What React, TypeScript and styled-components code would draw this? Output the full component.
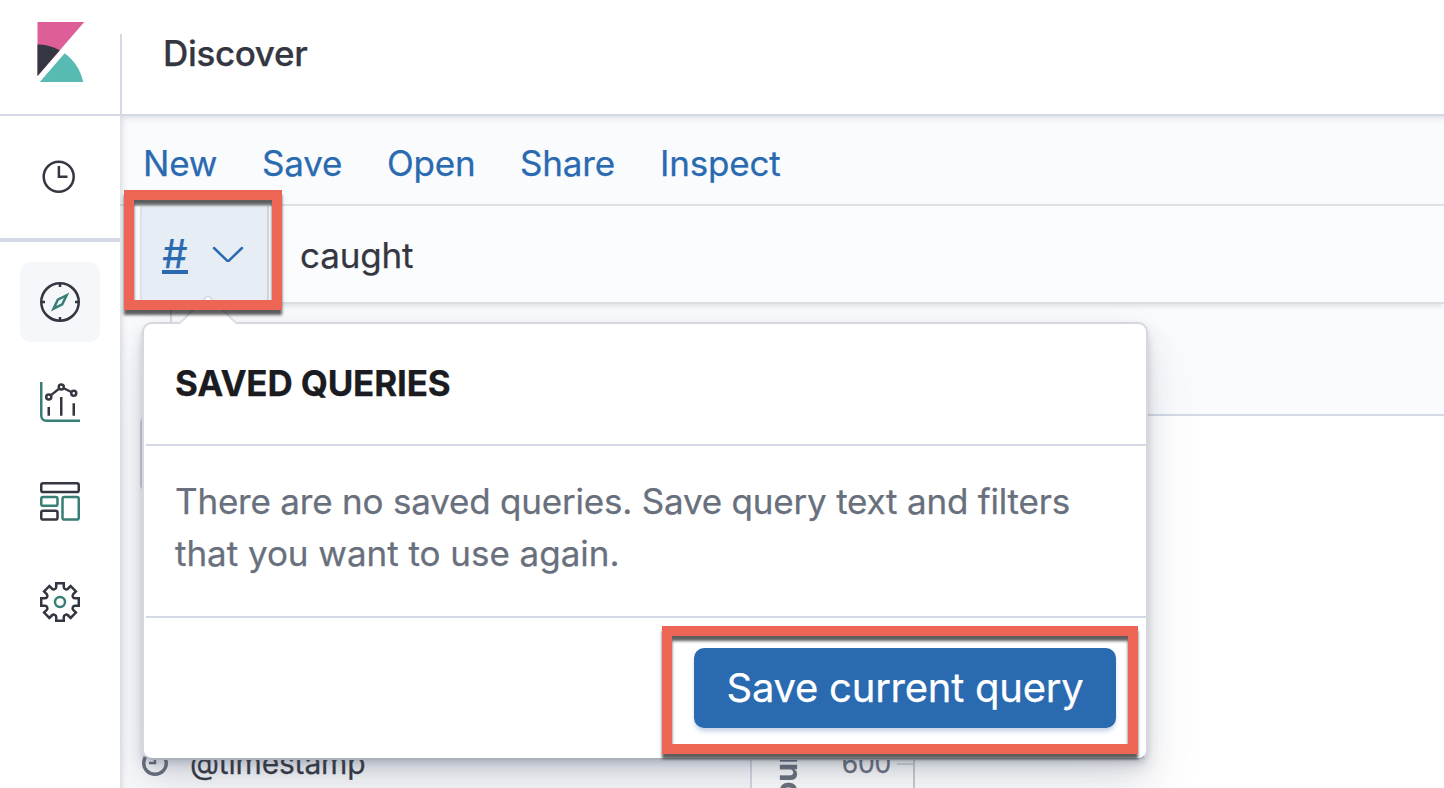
import React from "react";
import styled, { createGlobalStyle } from "styled-components";

const c = {
  text: "#343741",
  title: "#1a1c21",
  subdued: "#69707d",
  primary: "#2a6ab0",
  border: "#d3dae6",
  accent: "#377e75",
  callout: "#ed6554",
};

const GlobalStyle = createGlobalStyle`
  *, *::before, *::after { box-sizing: border-box; }
  body {
    margin: 0;
    background: #fff;
    color: ${c.text};
    font-family: Inter, "Liberation Sans", sans-serif;
    font-size: 35px;
    letter-spacing: -0.005em;
    -webkit-text-stroke: 0.25px currentColor;
    overflow: hidden;
  }
`;

const Page = styled.div`
  width: 1444px;
  height: 788px;
  display: flex;
  flex-direction: column;
  position: relative;
  overflow: hidden;
`;

const Header = styled.header`
  height: 116px;
  flex: none;
  display: flex;
  border-bottom: 2px solid ${c.border};
`;

const LogoCell = styled.div`
  width: 120px;
  padding: 22px 0 0 30px;
  svg { display: block; }
`;

const HeaderTitle = styled.div`
  margin-top: 34px;
  flex: 1;
  border-left: 2px solid ${c.border};
  padding-left: 41px;
  line-height: 38px;
  font-weight: 500;
  letter-spacing: -0.01em;
`;

const Body = styled.div`
  flex: 1;
  min-height: 0;
  display: flex;
`;

const SideNav = styled.nav`
  width: 120px;
  flex: none;
  display: flex;
  flex-direction: column;
  align-items: center;
`;

const Recent = styled.div`
  width: 100%;
  height: 126px;
  flex: none;
  border-bottom: 4px solid ${c.border};
  padding: 44px 0 0 42px;
  svg { display: block; }
`;

const NavList = styled.div`
  display: flex;
  flex-direction: column;
  gap: 20px;
  padding-top: 20px;
`;

const NavItem = styled.a<{ $active?: boolean }>`
  width: 80px;
  height: 80px;
  border-radius: 10px;
  display: flex;
  align-items: center;
  justify-content: center;
  background: ${(p) => (p.$active ? "#f5f7fa" : "transparent")};
`;

const Main = styled.main`
  flex: 1;
  min-width: 0;
  display: flex;
  flex-direction: column;
  background: #fafbfd;
  position: relative;
  overflow: hidden;
  &::before {
    content: "";
    position: absolute;
    inset: 0;
    pointer-events: none;
    box-shadow: inset 6px 5px 6px -4px rgba(65, 78, 101, 0.2);
  }
`;

const Menu = styled.div`
  height: 90px;
  flex: none;
  display: flex;
  gap: 45px;
  padding: 26px 0 0 23px;
  border-bottom: 2px solid #dfe1e6;
  line-height: 42px;
  color: ${c.primary};
`;

const MenuLink = styled.a<{ $w: number }>`
  width: ${(p) => p.$w}px;
  white-space: nowrap;
`;

const QueryBar = styled.div`
  height: 98px;
  flex: none;
  display: flex;
  margin-left: 20px;
  background: #fbfcfd;
  border-left: 2px solid #dfe1e6;
  border-bottom: 2px solid #dcdee3;
  box-shadow: 0 4px 4px -1px rgba(65, 78, 101, 0.12);
`;

const SavedQueryButton = styled.div`
  width: 127px;
  display: flex;
  align-items: center;
  background: #e6edf5;
  border-right: 2px solid #cdd3dc;
  padding-left: 20px;
  gap: 24px;
`;

const Hash = styled.span`
  width: 26px;
  height: 40px;
  display: flex;
  justify-content: center;
  font-size: 40px;
  line-height: 39px;
  letter-spacing: 0;
  color: ${c.primary};
  border-bottom: 4px solid ${c.primary};
`;

const QueryText = styled.div`
  padding: 28px 0 0 31px;
  line-height: 42px;
`;

const FilterBar = styled.div`
  height: 112px;
  flex: none;
  margin-left: 24px;
  border-bottom: 2px solid ${c.border};
  padding-left: 26px;
`;

const FilterDivider = styled.div`
  width: 2px;
  height: 60px;
  background: ${c.border};
`;

const Content = styled.div`
  flex: 1;
  min-height: 0;
  display: flex;
`;

const Fields = styled.aside`
  width: 632px;
  flex: none;
  display: flex;
  flex-direction: column;
  justify-content: space-between;
  background: #fafbfd;
  border-right: 2px solid ${c.border};
  padding-left: 20px;
`;

const IndexPattern = styled.div`
  height: 74px;
  width: 590px;
  margin-top: 1px;
  border: 2px solid #cbd3e1;
  border-radius: 6px;
`;

const FieldRow = styled.div`
  display: flex;
  align-items: center;
  height: 50px;
  gap: 21px;
  padding-left: 1px;
  font-size: 30px;
`;

const Chart = styled.section`
  flex: 1;
  background: #fff;
  display: flex;
  align-items: flex-end;
  padding-left: 19px;
`;

const AxisTitle = styled.div`
  width: 30px;
  height: 100px;
  margin-bottom: -34px;
  writing-mode: vertical-rl;
  transform: rotate(180deg);
  font-size: 30px;
  line-height: 30px;
  font-weight: 700;
  color: ${c.subdued};
`;

const AxisLabels = styled.div`
  width: 90px;
  text-align: right;
  font-size: 26.5px;
  line-height: 40px;
  color: ${c.subdued};
  margin-bottom: 5px;
`;

const AxisTick = styled.div`
  width: 16px;
  height: 25px;
  margin-left: 6px;
  border-top: 2px solid #dcdcde;
`;

const AxisLine = styled.div`
  width: 2px;
  height: 320px;
  background: #cbcdd1;
`;

const Popover = styled.div`
  position: absolute;
  left: 22px;
  top: 206px;
  width: 1006px;
  height: 438px;
  background: #fff;
  border: 2px solid #d6d8de;
  border-bottom-color: #acb1bc;
  border-radius: 10px;
  box-shadow:
    0 30px 60px 0 rgba(65, 78, 101, 0.1),
    0 15px 30px 0 rgba(65, 78, 101, 0.12),
    0 8px 12px 0 rgba(65, 78, 101, 0.12),
    0 3px 5px 0 rgba(65, 78, 101, 0.15);
`;

const Arrow = styled.svg`
  position: absolute;
  left: 34px;
  top: -31px;
  width: 60px;
  height: 32px;
`;

const PopoverTitle = styled.div`
  height: 122px;
  margin-left: 2px;
  padding: 37px 0 0 29px;
  border-bottom: 2px solid ${c.border};
  line-height: 44px;
  font-weight: 700;
  color: ${c.title};
  text-transform: uppercase;
`;

const PopoverText = styled.p`
  margin: 0 0 0 2px;
  height: 172px;
  padding: 29px 0 0 29px;
  border-bottom: 2px solid ${c.border};
  line-height: 52px;
  color: ${c.subdued};
  white-space: nowrap;
`;

const TextLine = styled.span<{ $tracking: number }>`
  display: block;
  letter-spacing: ${(p) => p.$tracking}px;
`;

const PopoverFooter = styled.div`
  display: flex;
  justify-content: flex-end;
  padding: 30px 30px 0 0;
`;

const SaveButton = styled.button`
  width: 422px;
  height: 80px;
  padding: 0;
  border: 0;
  border-radius: 10px;
  background: ${c.primary};
  color: #fff;
  font: 400 40px/80px Inter, "Liberation Sans", sans-serif;
  letter-spacing: -0.006em;
  white-space: nowrap;
  box-shadow: 0 4px 5px -1px rgba(54, 97, 166, 0.3);
`;

const Highlight = styled.div<{ $x: number; $y: number; $w: number; $h: number }>`
  position: absolute;
  left: ${(p) => p.$x}px;
  top: ${(p) => p.$y}px;
  width: ${(p) => p.$w}px;
  height: ${(p) => p.$h}px;
  border: 10px solid ${c.callout};
  filter: drop-shadow(0 5px 1.7px rgba(0, 0, 0, 0.63));
  pointer-events: none;
`;

const KibanaLogo = () => (
  <svg width="60" height="60" viewBox="0 0 32 32">
    <path fill="#de5e98" d="M4 0v28.789L28.935.017z" />
    <path fill="#343741" d="M4 12v16.789l11.906-13.738A24.721 24.721 0 004 12z" />
    <path fill="#57bbb3" d="M18.479 16.664L6.268 30.754l-1.073 1.237h23.191c-1.252-6.292-4.883-11.719-9.908-15.327z" />
  </svg>
);

const ClockIcon = () => (
  <svg width="34" height="34" viewBox="0 0 34 34" fill="none" stroke={c.text} strokeWidth="2.5">
    <circle cx="16.7" cy="16.7" r="15" />
    <path d="M16.9 6v10.8h8.6" />
  </svg>
);

const AppIcon = ({ children }: { children: React.ReactNode }) => (
  <svg width="40" height="40" viewBox="0 0 32 32" fill="none" stroke={c.text} strokeWidth="2">
    {children}
  </svg>
);

const CompassIcon = () => (
  <AppIcon>
    <circle cx="16" cy="16" r="15" />
    <path d="M16 1v3M16 28v3M1 16h3M28 16h3" />
    <path stroke={c.accent} d="M21.3 10.6l-7 3.5-3.5 7.2 7-3.5z" />
  </AppIcon>
);

const VisualizeIcon = () => (
  <AppIcon>
    <path stroke={c.accent} d="M1 0v27a4 4 0 004 4h27" />
    <path d="M7 20v7M17 12v15M27 17v10M8.8 10.5l6.3-5M19 5l6 3" />
    <circle cx="7" cy="12" r="2" />
    <circle cx="17" cy="4" r="2" />
    <circle cx="27" cy="9" r="2" />
  </AppIcon>
);

const DashboardIcon = () => (
  <AppIcon>
    <rect x="1" y="1" width="30" height="7" rx="1.5" />
    <rect x="1" y="12" width="13" height="7" rx="1.5" stroke={c.accent} />
    <rect x="1" y="23" width="13" height="7" rx="1.5" />
    <rect x="18" y="12" width="13" height="18" rx="1.5" stroke={c.accent} />
  </AppIcon>
);

const gearPath = Array.from({ length: 8 }, (_, i) => {
  const a = (i * Math.PI) / 4;
  const rot = (x: number, y: number) =>
    `${(16 + x * Math.cos(a) - y * Math.sin(a)).toFixed(2)} ${(16 + x * Math.sin(a) + y * Math.cos(a)).toFixed(2)}`;
  const valley = i === 0 ? `M${rot(-3, -12)}` : `A2 2 0 0 0 ${rot(-3, -12)}`;
  return `${valley}L${rot(-3, -15)}L${rot(3, -15)}L${rot(3, -12)}`;
}).join("") + "A2 2 0 0 0 13 4Z";

const GearIcon = () => (
  <AppIcon>
    <path d={gearPath} />
    <circle cx="16" cy="16" r="4" stroke={c.accent} />
  </AppIcon>
);

export default function App() {
  return (
    <Page>
      <GlobalStyle />
      <Header>
        <LogoCell><KibanaLogo /></LogoCell>
        <HeaderTitle>Discover</HeaderTitle>
      </Header>
      <Body>
        <SideNav>
          <Recent><ClockIcon /></Recent>
          <NavList>
            <NavItem $active><CompassIcon /></NavItem>
            <NavItem><VisualizeIcon /></NavItem>
            <NavItem><DashboardIcon /></NavItem>
            <NavItem><GearIcon /></NavItem>
          </NavList>
        </SideNav>
        <Main>
          <Menu>
            <MenuLink $w={74}>New</MenuLink>
            <MenuLink $w={80}>Save</MenuLink>
            <MenuLink $w={88}>Open</MenuLink>
            <MenuLink $w={95}>Share</MenuLink>
            <MenuLink $w={122}>Inspect</MenuLink>
          </Menu>
          <QueryBar>
            <SavedQueryButton>
              <Hash>#</Hash>
              <svg width="32" height="18" viewBox="0 0 32 18" fill="none" stroke={c.primary} strokeWidth="2.5" strokeLinecap="round">
                <path d="M2 3l12.6 12.2q1.4 1.2 2.8 0L30 3" />
              </svg>
            </SavedQueryButton>
            <QueryText>caught</QueryText>
          </QueryBar>
          <FilterBar><FilterDivider /></FilterBar>
          <Content>
            <Fields>
              <IndexPattern />
              <FieldRow>
                <svg width="28" height="28" viewBox="0 0 28 28" fill="none" stroke={c.subdued} strokeWidth="3.4">
                  <circle cx="14" cy="14" r="11.3" />
                  <path d="M14 7v7H8" strokeWidth="2.4" />
                </svg>
                @timestamp
              </FieldRow>
            </Fields>
            <Chart>
              <AxisTitle>Count</AxisTitle>
              <AxisLabels>600</AxisLabels>
              <AxisTick />
              <AxisLine />
            </Chart>
          </Content>
          <Popover>
            <Arrow viewBox="0 0 60 32">
              <path d="M0 32L28 4.5q2-2 4 0L60 32z" fill="#fff" />
              <path d="M1 31L28 4.5q2-2 4 0L59 31" fill="none" stroke={c.border} strokeWidth="1.6" />
            </Arrow>
            <PopoverTitle>Saved queries</PopoverTitle>
            <PopoverText>
              <TextLine $tracking={-0.2}>There are no saved queries. Save query text and filters</TextLine>
              <TextLine $tracking={-0.03}>that you want to use again.</TextLine>
            </PopoverText>
            <PopoverFooter><SaveButton>Save current query</SaveButton></PopoverFooter>
          </Popover>
        </Main>
      </Body>
      <Highlight $x={124} $y={190} $w={158} $h={120} />
      <Highlight $x={662} $y={626} $w={476} $h={128} />
    </Page>
  );
}
